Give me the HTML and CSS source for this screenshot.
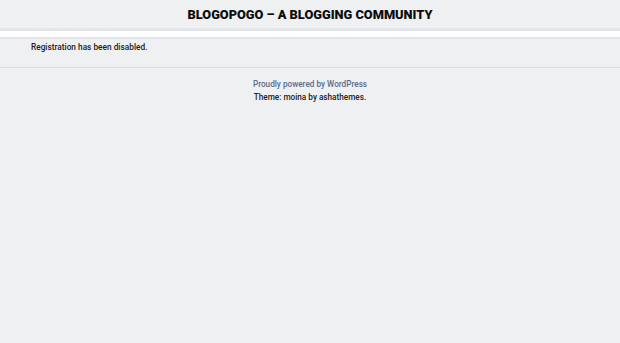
FILE: index.html
```html
<!DOCTYPE html>
<html lang="en">
<head>
<meta charset="utf-8">
<title>Blogopogo</title>
<link rel="stylesheet" href="styles.css">
</head>
<body>
<header class="site-header">
  <h1 class="site-title">BLOGOPOGO – A BLOGGING COMMUNITY</h1>
</header>
<div class="nav-bar"></div>
<main class="content">
  <p class="notice">Registration has been disabled.</p>
</main>
<footer class="site-footer">
  <p class="powered"><a href="#">Proudly powered by WordPress</a></p>
  <p class="theme">Theme: moina by ashathemes.</p>
</footer>
</body>
</html>
```
FILE: styles.css
```css
html, body {
  margin: 0;
  padding: 0;
  background: #eff0f2;
  font-family: Roboto, "Liberation Sans", sans-serif;
  color: #1a1a1a;
}
.site-header {
  height: 28px;
  display: flex;
  align-items: center;
  justify-content: center;
  background: #eff0f2;
}
.site-title {
  margin: 0;
  font-size: 12.8px;
  font-weight: 900;
  letter-spacing: 0;
  color: #0d0d0d;
}
.nav-bar {
  height: 6px;
  background: #fff;
  border-top: 3px solid #e4e5e8;
  border-bottom: 2px solid #e4e5e8;
}
.content {
  padding: 2px 31px 0;
  height: 26px;
  border-bottom: 1px solid #dcdde0;
}
.notice {
  margin: 0;
  font-size: 8.3px;
  font-weight: 500;
  line-height: 12px;
  color: #1c1c1c;
}
.site-footer {
  text-align: center;
  padding: 10px 0 11px;
  background: #eff0f1;
}
.site-footer p {
  margin: 0;
  font-size: 8.2px;
  font-weight: 500;
  line-height: 13px;
}
.powered a {
  color: #5b6b8c;
  text-decoration: none;
}
.theme {
  color: #222;
}
```
